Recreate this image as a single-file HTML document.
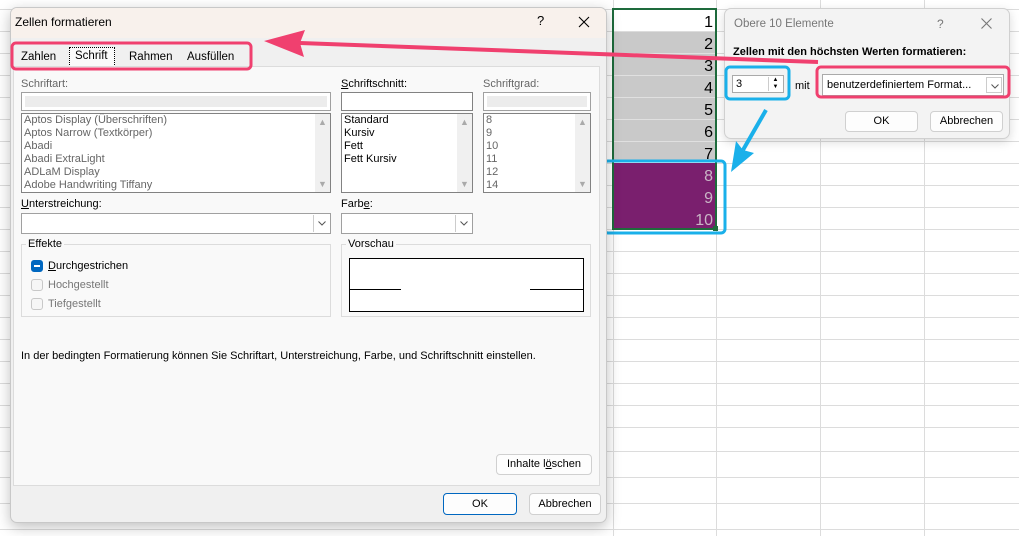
<!DOCTYPE html>
<html><head><meta charset="utf-8"><style>
*{box-sizing:border-box;margin:0;padding:0}
body{width:1019px;height:536px;position:relative;overflow:hidden;background:#fff;font-family:"Liberation Sans",sans-serif;font-size:11px;color:#000}
.a{position:absolute}
.lbl{position:absolute;font-size:11px}
.box{position:absolute;background:#fff;border:1px solid #a0a0a0}
.list{position:absolute;background:#fff;border:1px solid #828282;font-size:11px;line-height:13px;padding:0 2px}
.sb{position:absolute;right:0;top:0;bottom:0;width:15px;background:#f0f0f0}
.btn{position:absolute;background:#fdfdfd;border:1px solid #d0d0d0;border-radius:4px;text-align:center;font-size:11px}
.dd{position:absolute;right:1px;top:1px;bottom:1px;width:16px;border-left:1px solid #ccc;background:#fff}
.dd svg{position:absolute;left:4px;top:6px}
.cb{position:absolute;width:12px;height:12px;border:1px solid #c8c8c8;border-radius:3px;background:#f6f6f6}
</style></head><body>
<svg class="a" style="left:0;top:0" width="1019" height="536">
<g stroke="#dcdcdc" stroke-width="1">
<line x1="613.5" y1="0" x2="613.5" y2="536"/><line x1="716.5" y1="0" x2="716.5" y2="536"/><line x1="820.5" y1="0" x2="820.5" y2="536"/><line x1="924.5" y1="0" x2="924.5" y2="536"/>
<line x1="0" y1="9.5" x2="1019" y2="9.5"/><line x1="0" y1="31.5" x2="1019" y2="31.5"/><line x1="0" y1="53.5" x2="1019" y2="53.5"/><line x1="0" y1="75.5" x2="1019" y2="75.5"/><line x1="0" y1="97.5" x2="1019" y2="97.5"/><line x1="0" y1="119.5" x2="1019" y2="119.5"/><line x1="0" y1="141.5" x2="1019" y2="141.5"/><line x1="0" y1="163.5" x2="1019" y2="163.5"/><line x1="0" y1="185.5" x2="1019" y2="185.5"/><line x1="0" y1="207.5" x2="1019" y2="207.5"/><line x1="0" y1="229.5" x2="1019" y2="229.5"/><line x1="0" y1="251.5" x2="1019" y2="251.5"/><line x1="0" y1="273.5" x2="1019" y2="273.5"/><line x1="0" y1="295.5" x2="1019" y2="295.5"/><line x1="0" y1="317.5" x2="1019" y2="317.5"/><line x1="0" y1="339.5" x2="1019" y2="339.5"/><line x1="0" y1="361.5" x2="1019" y2="361.5"/><line x1="0" y1="383.5" x2="1019" y2="383.5"/><line x1="0" y1="405.5" x2="1019" y2="405.5"/><line x1="0" y1="427.5" x2="1019" y2="427.5"/><line x1="0" y1="451.5" x2="1019" y2="451.5"/><line x1="0" y1="477.5" x2="1019" y2="477.5"/><line x1="0" y1="503.5" x2="1019" y2="503.5"/><line x1="0" y1="529.5" x2="1019" y2="529.5"/>
</g>
<rect x="614" y="32" width="102" height="130" fill="#c9c9c9"/>
<rect x="614" y="163" width="102" height="66" fill="#7a1f6e"/>
<g stroke="#e0e0e0"><line x1="614" y1="53.5" x2="716" y2="53.5"/><line x1="614" y1="75.5" x2="716" y2="75.5"/><line x1="614" y1="97.5" x2="716" y2="97.5"/><line x1="614" y1="119.5" x2="716" y2="119.5"/><line x1="614" y1="141.5" x2="716" y2="141.5"/></g>
<rect x="613" y="9" width="103" height="220" fill="none" stroke="#1e6b3c" stroke-width="2"/>
<rect x="713" y="226" width="5" height="5" fill="#1e6b3c"/>
<g font-family="Liberation Sans" font-size="16" text-anchor="end">
<text x="713" y="27">1</text><text x="713" y="49">2</text><text x="713" y="71">3</text><text x="713" y="93">4</text><text x="713" y="115">5</text><text x="713" y="137">6</text><text x="713" y="159">7</text>
<g fill="#c9b6c6"><text x="713" y="181">8</text><text x="713" y="203">9</text><text x="713" y="225">10</text></g></g>
<rect x="604" y="161" width="121" height="72" rx="4" fill="none" stroke="#1ab0ea" stroke-width="3"/>
</svg>

<div class="a" style="left:10px;top:7px;width:597px;height:516px;background:#f0f0f0;border:1px solid #c8c8c8;border-radius:7px;box-shadow:0 4px 14px rgba(0,0,0,.25);overflow:hidden">
 <div class="a" style="left:0;top:0;width:597px;height:30px;background:#f8f1ec"></div>
 <div class="lbl" style="left:4px;top:7px;font-size:12px">Zellen formatieren</div>
 <div class="lbl" style="left:526px;top:5px;font-size:13px">?</div>
 <svg class="a" style="left:567px;top:8px" width="12" height="12"><path d="M1 1L11 11M11 1L1 11" stroke="#000" stroke-width="1.1"/></svg>
 <div class="a" style="left:4px;top:37px;width:232px;height:22px;background:#f0f0f0"></div>
 <div class="lbl" style="left:10px;top:43px;font-size:11.5px">Zahlen</div>
 <div class="a" style="left:58px;top:39px;width:46px;height:20px;border:1px dotted #000;background:#fafafa"></div>
 <div class="lbl" style="left:64px;top:42px;font-size:11.5px">Schrift</div>
 <div class="lbl" style="left:118px;top:43px;font-size:11.5px">Rahmen</div>
 <div class="lbl" style="left:176px;top:43px;font-size:11.5px">Ausfüllen</div>
 <div class="a" style="left:2px;top:58px;width:587px;height:420px;background:#f9f9f9;border:1px solid #dcdcdc">
  <div class="lbl" style="left:7px;top:11px;color:#666">Schriftart:</div>
  <div class="box" style="left:7px;top:25px;width:310px;height:19px"><div class="a" style="left:3px;top:3px;right:3px;bottom:3px;background:#ececec"></div></div>
  <div class="list" style="left:7px;top:46px;width:310px;height:80px;color:#666">Aptos Display (Überschriften)<br>Aptos Narrow (Textkörper)<br>Abadi<br>Abadi ExtraLight<br>ADLaM Display<br>Adobe Handwriting Tiffany<div class="sb"><span class="a" style="left:3px;top:2px;color:#aaa;font-size:9px">▲</span><span class="a" style="left:3px;bottom:1px;color:#aaa;font-size:9px">▼</span></div></div>
  <div class="lbl" style="left:327px;top:11px"><u>S</u>chriftschnitt:</div>
  <div class="box" style="left:327px;top:25px;width:132px;height:19px;border-color:#828282"></div>
  <div class="list" style="left:327px;top:46px;width:132px;height:80px">Standard<br>Kursiv<br>Fett<br>Fett Kursiv<div class="sb"><span class="a" style="left:3px;top:2px;color:#aaa;font-size:9px">▲</span><span class="a" style="left:3px;bottom:1px;color:#aaa;font-size:9px">▼</span></div></div>
  <div class="lbl" style="left:469px;top:11px;color:#666">Schriftgrad:</div>
  <div class="box" style="left:469px;top:25px;width:108px;height:19px"><div class="a" style="left:3px;top:3px;right:3px;bottom:3px;background:#ececec"></div></div>
  <div class="list" style="left:469px;top:46px;width:108px;height:80px;color:#666">8<br>9<br>10<br>11<br>12<br>14<div class="sb"><span class="a" style="left:3px;top:2px;color:#aaa;font-size:9px">▲</span><span class="a" style="left:3px;bottom:1px;color:#aaa;font-size:9px">▼</span></div></div>
  <div class="lbl" style="left:7px;top:131px"><u>U</u>nterstreichung:</div>
  <div class="box" style="left:7px;top:146px;width:310px;height:21px"><div class="dd"><svg width="8" height="5"><path d="M0.5 0.5L4 4L7.5 0.5" stroke="#555" fill="none"/></svg></div></div>
  <div class="lbl" style="left:327px;top:131px">Farb<u>e</u>:</div>
  <div class="box" style="left:327px;top:146px;width:132px;height:21px"><div class="dd"><svg width="8" height="5"><path d="M0.5 0.5L4 4L7.5 0.5" stroke="#555" fill="none"/></svg></div></div>
  <div class="a" style="left:7px;top:177px;width:310px;height:73px;border:1px solid #dcdcdc"></div>
  <div class="lbl" style="left:12px;top:171px;background:#f9f9f9;padding:0 2px">Effekte</div>
  <div class="cb" style="left:17px;top:193px;background:#0067c0;border-color:#0067c0"><div class="a" style="left:2px;top:4px;width:6px;height:1.5px;background:#fff"></div></div>
  <div class="lbl" style="left:34px;top:193px"><u>D</u>urchgestrichen</div>
  <div class="cb" style="left:17px;top:212px"></div><div class="lbl" style="left:34px;top:212px;color:#777">Hochgestellt</div>
  <div class="cb" style="left:17px;top:231px"></div><div class="lbl" style="left:34px;top:231px;color:#777">Tiefgestellt</div>
  <div class="a" style="left:327px;top:177px;width:250px;height:73px;border:1px solid #dcdcdc"></div>
  <div class="lbl" style="left:332px;top:171px;background:#f9f9f9;padding:0 2px">Vorschau</div>
  <div class="a" style="left:335px;top:191px;width:235px;height:54px;background:#fff;border:1px solid #000"></div>
  <div class="a" style="left:336px;top:222px;width:51px;height:1px;background:#000"></div>
  <div class="a" style="left:516px;top:222px;width:53px;height:1px;background:#000"></div>
  <div class="lbl" style="left:7px;top:283px">In der bedingten Formatierung können Sie Schriftart, Unterstreichung, Farbe, und Schriftschnitt einstellen.</div>
  <div class="btn" style="left:482px;top:387px;width:96px;height:21px;line-height:19px">Inhalte l<u>ö</u>schen</div>
 </div>
 <div class="btn" style="left:432px;top:485px;width:74px;height:22px;line-height:20px;border-color:#0067c0">OK</div>
 <div class="btn" style="left:518px;top:485px;width:72px;height:22px;line-height:20px">Abbrechen</div>
</div>

<div class="a" style="left:724px;top:8px;width:286px;height:131px;background:#f3f3f3;border:1px solid #d0d0d0;border-radius:7px;box-shadow:0 3px 10px rgba(0,0,0,.15)">
 <div class="lbl" style="left:9px;top:9px;color:#777;font-size:11.5px">Obere 10 Elemente</div>
 <div class="lbl" style="left:212px;top:8px;color:#777;font-size:12px">?</div>
 <svg class="a" style="left:256px;top:9px" width="11" height="11"><path d="M0.5 0.5L10.5 10.5M10.5 0.5L0.5 10.5" stroke="#777" stroke-width="1.1"/></svg>
 <div class="lbl" style="left:8px;top:37px;font-weight:bold;font-size:11px">Zellen mit den höchsten Werten formatieren:</div>
 <div class="box" style="left:7px;top:66px;width:52px;height:18px;border-color:#aaa"><span class="a" style="left:3px;top:2px">3</span><div class="a" style="right:1px;top:1px;width:14px;height:14px;border-left:1px solid #ccc;font-size:6px;line-height:7px;text-align:center">▲<br>▼</div></div>
 <div class="lbl" style="left:70px;top:71px">mit</div>
 <div class="box" style="left:97px;top:65px;width:182px;height:22px;border-color:#aaa"><span class="a" style="left:4px;top:4px">benutzerdefiniertem Format...</span><div class="dd" style="top:2px;bottom:2px;border:1px solid #ccc"><svg width="8" height="5" style="top:6px"><path d="M0.5 0.5L4 4L7.5 0.5" stroke="#555" fill="none"/></svg></div></div>
 <div class="btn" style="left:120px;top:102px;width:73px;height:21px;line-height:19px">OK</div>
 <div class="btn" style="left:205px;top:102px;width:73px;height:21px;line-height:19px">Abbrechen</div>
</div>

<svg class="a" style="left:0;top:0" width="1019" height="536">
<rect x="12" y="43" width="239" height="26" rx="4" fill="none" stroke="#f0406f" stroke-width="3"/>
<rect x="817" y="67" width="192" height="30" rx="4" fill="none" stroke="#f0406f" stroke-width="3"/>
<rect x="726" y="67" width="63" height="32" rx="4" fill="none" stroke="#1ab0ea" stroke-width="3"/>
<line x1="818" y1="62" x2="300" y2="43" stroke="#f0406f" stroke-width="4"/>
<polygon points="264,41 305,30 300,43 304,57" fill="#f0406f"/>
<line x1="766" y1="110" x2="743" y2="150" stroke="#1ab0ea" stroke-width="4"/>
<polygon points="731,172 736,141 743,150 754,153" fill="#1ab0ea"/>
</svg>
</body></html>
